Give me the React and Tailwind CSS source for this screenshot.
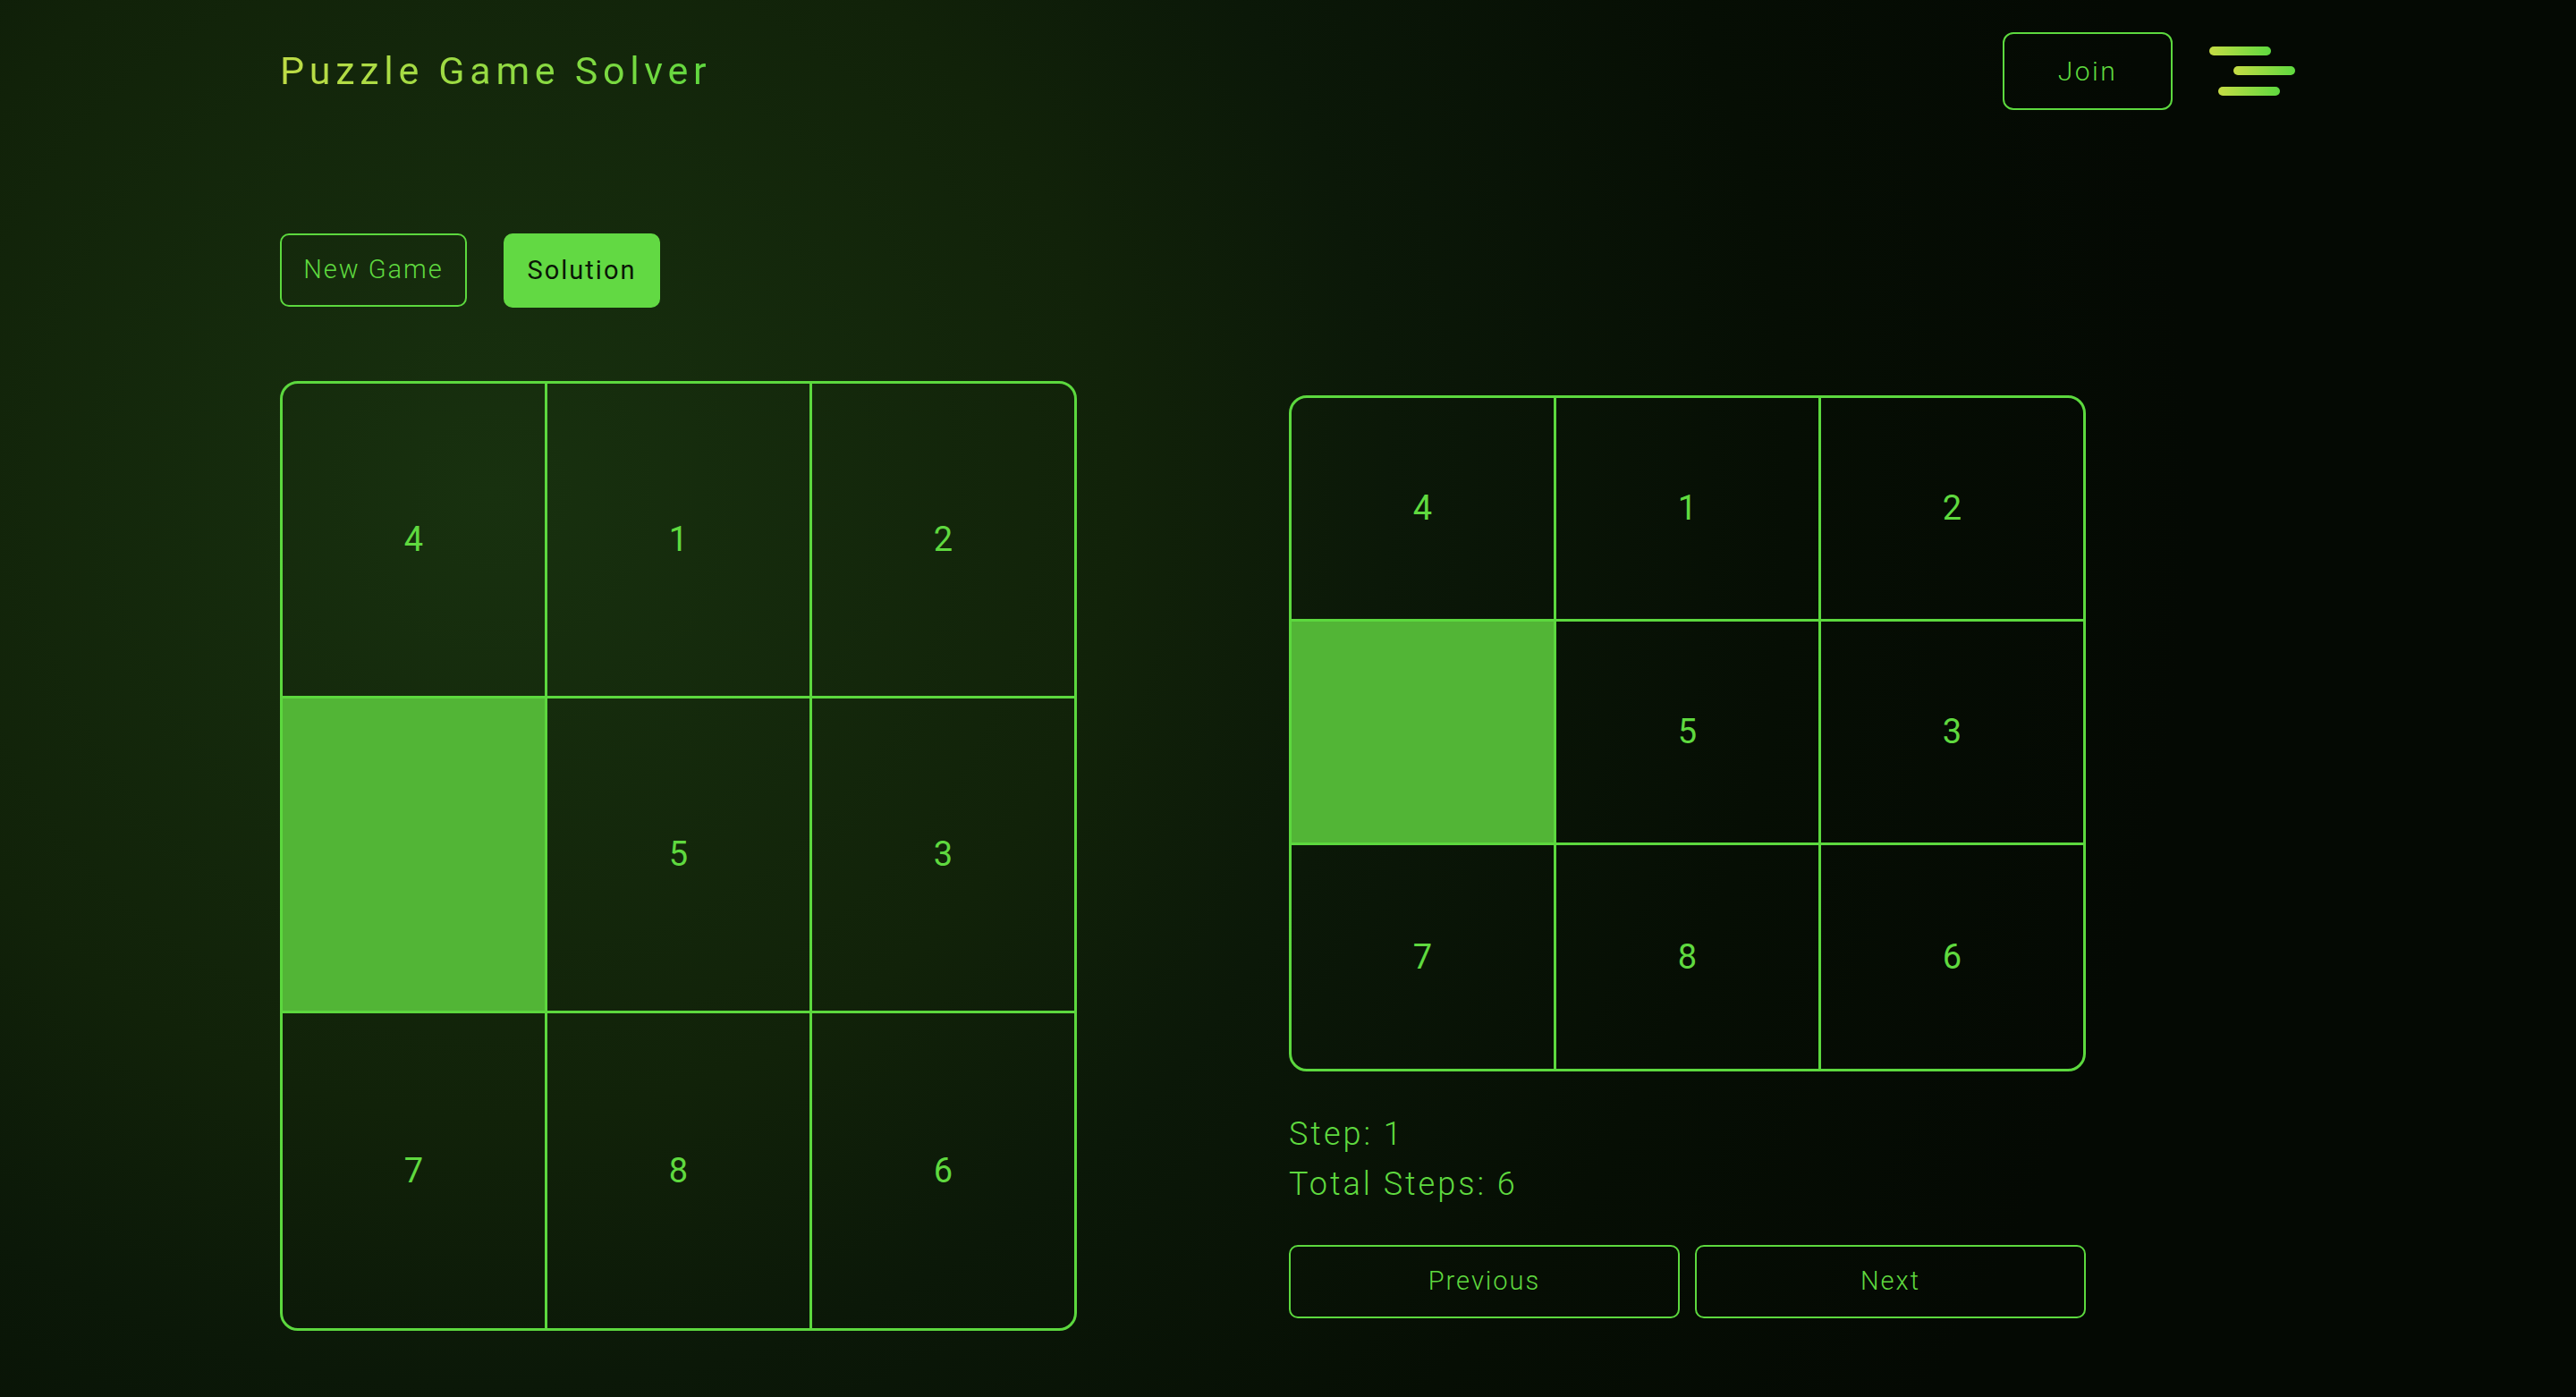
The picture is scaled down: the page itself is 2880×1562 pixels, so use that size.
const board = [4, 1, 2, 0, 5, 3, 7, 8, 6];

export default function App() {
  return (
    <div
      className="min-h-[1562px] w-full bg-[radial-gradient(circle_at_550px_550px,#18310f_0px,#112209_700px,#0b1808_1000px,#060e04_1450px,#040903_1900px)] px-[313px] pt-[36px] text-[#5fd93f]"
      style={{ fontFamily: "Roboto, 'Liberation Sans', sans-serif" }}
    >
      <header className="flex h-[87px] items-center">
        <h1 className="bg-gradient-to-r from-[#bedc46] to-[#5ed83f] bg-clip-text text-[43px] font-normal tracking-[5.7px] text-transparent">
          Puzzle Game Solver
        </h1>
        <div className="ml-auto flex items-center gap-[41px]">
          <button className="h-[87px] w-[190px] rounded-[12px] border-2 border-[#5cd83e] text-[30px] font-light tracking-[2.5px] text-[#5fd93f]">
            Join
          </button>
          <MenuIcon />
        </div>
      </header>

      <div className="mt-[138px] flex gap-[41px]">
        <button className="h-[82px] w-[209px] rounded-[10px] border-2 border-[#5cd83e] text-[29px] font-light tracking-[2px] text-[#5fd93f]">
          New Game
        </button>
        <button className="h-[83px] w-[175px] rounded-[10px] bg-[#62d943] text-[29px] font-normal tracking-[2px] text-[#0a1606]">
          Solution
        </button>
      </div>

      <div className="mt-[82px] flex items-start gap-[237px]">
        <Board tiles={board} cellHeight="h-[352px]" />

        <div className="mt-[16px] w-[891px]">
          <Board tiles={board} cellHeight="h-[250px]" />
          <div className="mt-[42px] text-[36px] font-light leading-[56px] tracking-[3px]">
            <p>Step: 1</p>
            <p>Total Steps: 6</p>
          </div>
          <div className="mt-[40px] flex gap-[17px]">
            <button className="h-[82px] flex-1 rounded-[10px] border-2 border-[#5cd83e] text-[29px] font-light tracking-[2px]">
              Previous
            </button>
            <button className="h-[82px] flex-1 rounded-[10px] border-2 border-[#5cd83e] text-[29px] font-light tracking-[2px]">
              Next
            </button>
          </div>
        </div>
      </div>
    </div>
  );
}

function Board({ tiles, cellHeight }) {
  return (
    <div className="grid w-[891px] shrink-0 grid-cols-[296px_296px_293px] overflow-hidden rounded-[20px] border-[3px] border-[#5cd83e]">
      {tiles.map((t, i) => {
        const col = i % 3;
        const row = Math.floor(i / 3);
        return (
          <div
            key={i}
            className={[
              "flex items-center justify-center border-[#5cd83e] text-[38px] font-normal",
              cellHeight,
              col < 2 ? "border-r-[3px]" : "",
              row < 2 ? "border-b-[3px]" : "",
              t === 0 ? "bg-[#52b536]" : "",
            ].join(" ")}
          >
            {t !== 0 && t}
          </div>
        );
      })}
    </div>
  );
}

function MenuIcon() {
  return (
    <svg width="97" height="56" viewBox="0 0 97 56" fill="none">
      <defs>
        <linearGradient id="mg" x1="0" x2="1" y1="0" y2="0">
          <stop offset="0" stopColor="#c6dc45" />
          <stop offset="1" stopColor="#5ed93f" />
        </linearGradient>
      </defs>
      <rect x="0" y="0" width="69" height="10" rx="5" fill="url(#mg)" />
      <rect x="27" y="22" width="69" height="10" rx="5" fill="url(#mg)" />
      <rect x="10" y="45" width="69" height="10" rx="5" fill="url(#mg)" />
    </svg>
  );
}
